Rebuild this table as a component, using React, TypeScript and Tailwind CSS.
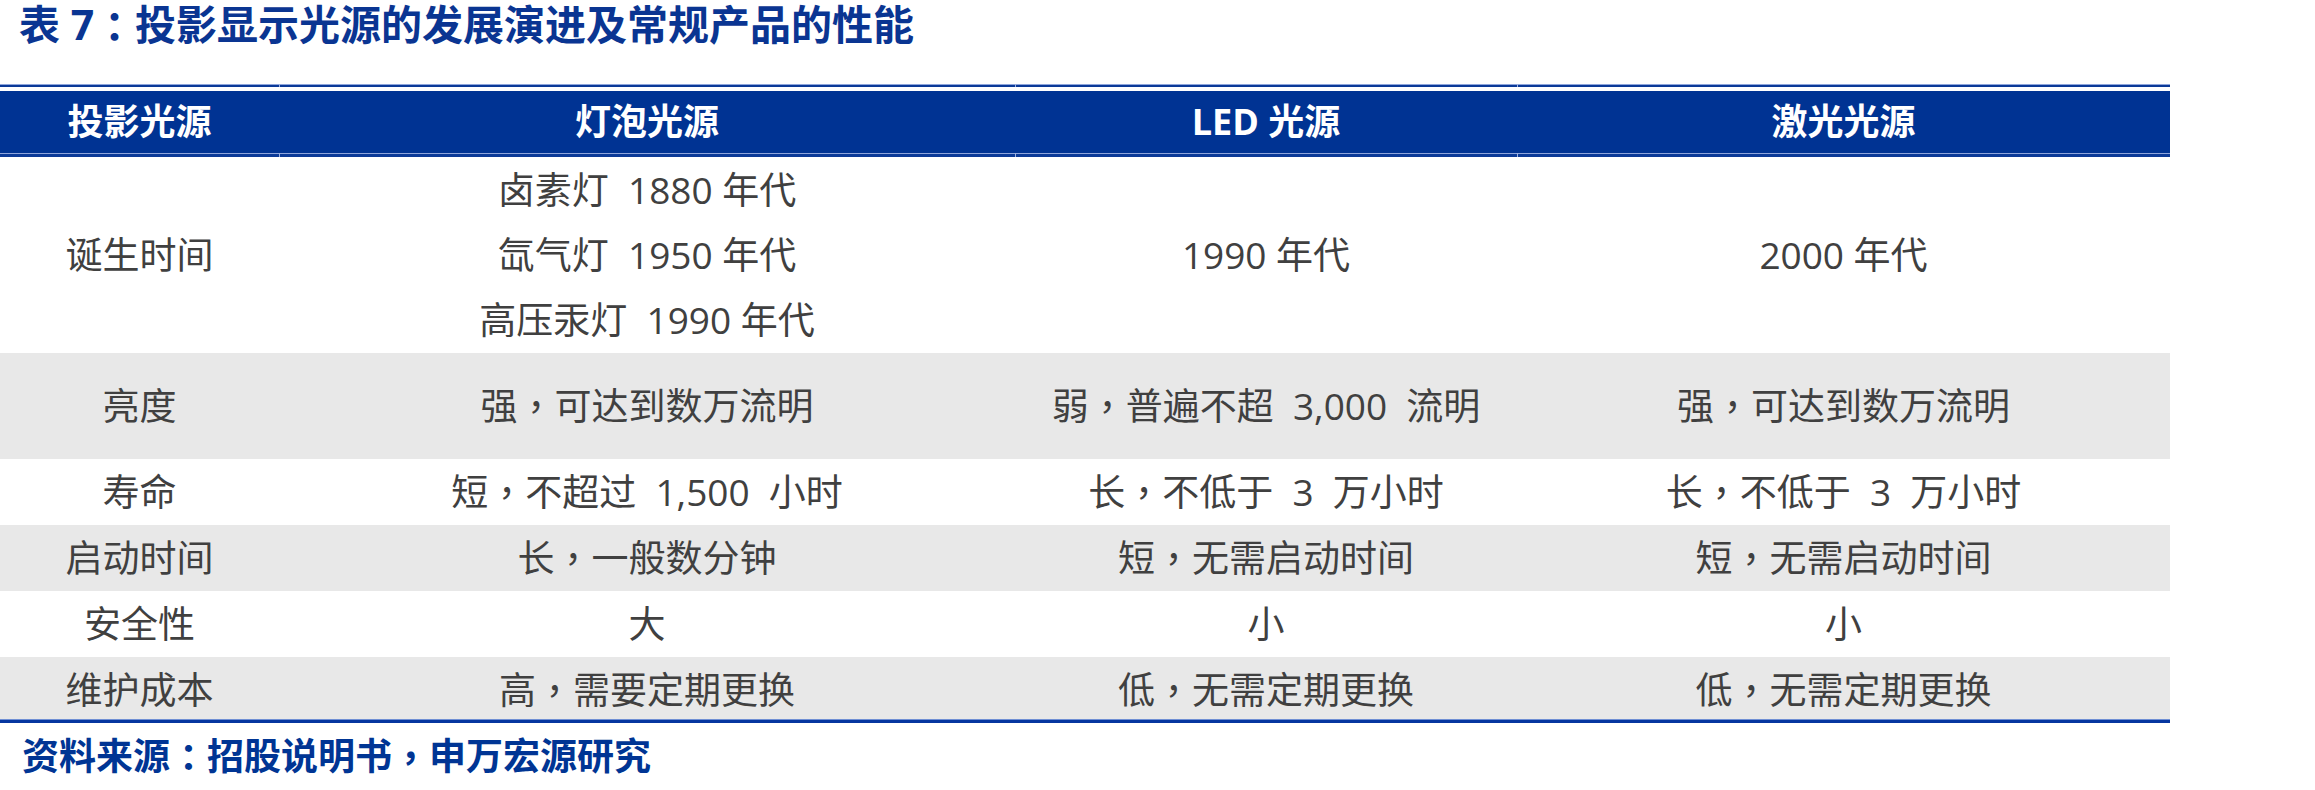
import React from "react";

const font = { fontFamily: "'Open Sans', 'Noto Sans CJK SC', sans-serif" };
const punctFont = { fontFamily: "'Noto Sans CJK TC', sans-serif" };

const cols = "grid grid-cols-[279px_736px_502px_653px]";

// full-width punctuation sits centred in its box in the reference, as in the TC cut
function Txt({ t }: { t: string }) {
    return (
        <>
            {t.split(/([，：])/).map((part, i) =>
                part === "，" || part === "：" ? (
                    <span key={i} style={punctFont}>
                        {part}
                    </span>
                ) : (
                    <React.Fragment key={i}>{part}</React.Fragment>
                )
            )}
        </>
    );
}

const rows: { label: string; cells: string[][]; h: string; bg: string }[] = [
    {
        label: "诞生时间",
        cells: [["卤素灯  1880 年代", "氙气灯  1950 年代", "高压汞灯  1990 年代"], ["1990 年代"], ["2000 年代"]],
        h: "h-[196px]",
        bg: "bg-white",
    },
    {
        label: "亮度",
        cells: [["强，可达到数万流明"], ["弱，普遍不超  3,000  流明"], ["强，可达到数万流明"]],
        h: "h-[106px]",
        bg: "bg-[#e8e8e8]",
    },
    {
        label: "寿命",
        cells: [["短，不超过  1,500  小时"], ["长，不低于  3  万小时"], ["长，不低于  3  万小时"]],
        h: "h-[66px]",
        bg: "bg-white",
    },
    {
        label: "启动时间",
        cells: [["长，一般数分钟"], ["短，无需启动时间"], ["短，无需启动时间"]],
        h: "h-[66px]",
        bg: "bg-[#e8e8e8]",
    },
    {
        label: "安全性",
        cells: [["大"], ["小"], ["小"]],
        h: "h-[66px]",
        bg: "bg-white",
    },
    {
        label: "维护成本",
        cells: [["高，需要定期更换"], ["低，无需定期更换"], ["低，无需定期更换"]],
        h: "h-[62px]",
        bg: "bg-[#e8e8e8]",
    },
];

function BorderPair({ top }: { top?: boolean }) {
    return (
        <div className={`${cols} w-[2167px]`}>
            {[0, 1, 2, 3].map((i) => (
                <div key={i} className={`flex flex-col ${i > 0 ? "border-l border-[#9db0de]" : ""}`}>
                    <div className="h-[1px] bg-[#8ea5dc]"></div>
                    <div className={`${top ? "h-[2px]" : "h-[3px]"} bg-[#0b3a98]`}></div>
                </div>
            ))}
        </div>
    );
}

export default function App() {
    return (
        <div className="w-[2315px] h-[790px] bg-white overflow-hidden" style={font}>
            {/* Title */}
            <div className="h-[48px] pl-[19px] flex items-center text-[41px] font-bold text-[#0a3592] leading-[48px] whitespace-pre">
                <Txt t="表 7：投影显示光源的发展演进及常规产品的性能" />
            </div>

            <div className="mt-[36px] w-[2170px]">
                <BorderPair top />
                <div className="h-[4px]"></div>
                {/* Header */}
                <div className={`${cols} h-[62px] bg-[#003393] text-white text-[36px] font-bold`}>
                    <div className="flex items-center justify-center">投影光源</div>
                    <div className="flex items-center justify-center">灯泡光源</div>
                    <div className="flex items-center justify-center">LED 光源</div>
                    <div className="flex items-center justify-center">激光光源</div>
                </div>
                <BorderPair />

                {/* Body */}
                {rows.map((r) => (
                    <div key={r.label} className={`${cols} ${r.h} ${r.bg} text-[37px] text-[#404040]`}>
                        <div className="flex items-center justify-center">{r.label}</div>
                        {r.cells.map((lines, i) => (
                            <div key={i} className="flex flex-col items-center justify-center">
                                {lines.map((t) => (
                                    <div key={t} className="h-[65px] flex items-center whitespace-pre">
                                        <Txt t={t} />
                                    </div>
                                ))}
                            </div>
                        ))}
                    </div>
                ))}

                <div className="h-[1px] bg-[#6f8fd4]"></div>
                <div className="h-[3px] bg-[#0636a0]"></div>
            </div>

            {/* Source */}
            <div className="h-[66px] pl-[22px] flex items-center text-[37px] font-bold text-[#003594] leading-[48px]">
                <Txt t="资料来源：招股说明书，申万宏源研究" />
            </div>
        </div>
    );
}
